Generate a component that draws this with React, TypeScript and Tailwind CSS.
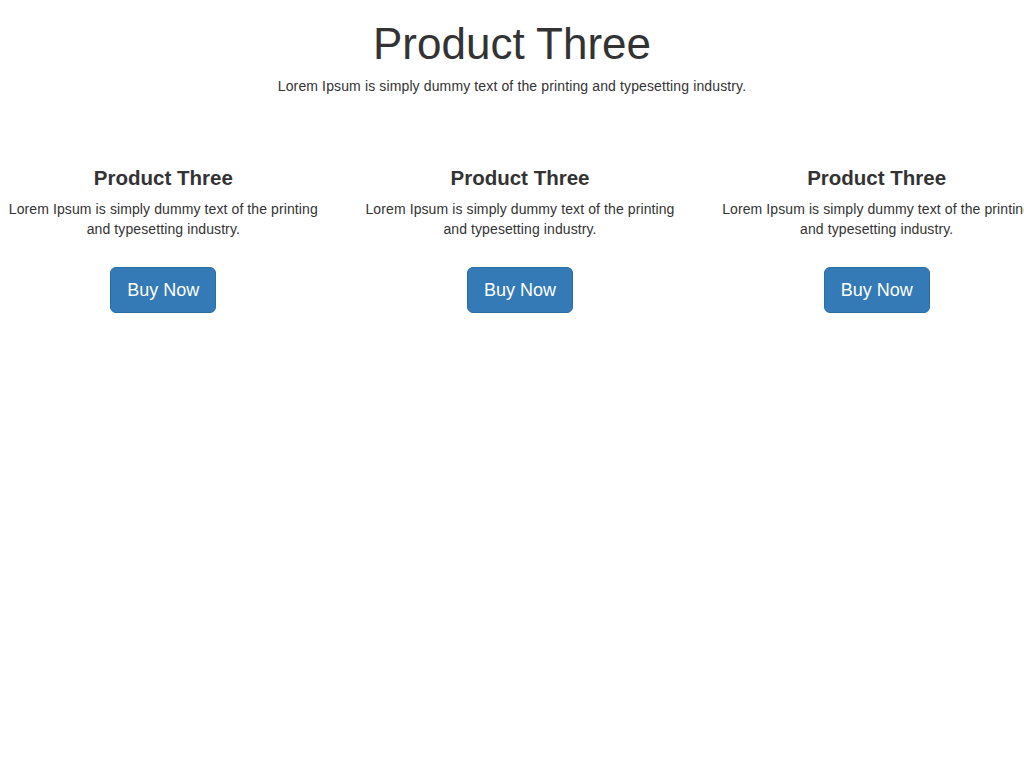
const products = [
  { title: 'Product Three', text: 'Lorem Ipsum is simply dummy text of the printing and typesetting industry.' },
  { title: 'Product Three', text: 'Lorem Ipsum is simply dummy text of the printing and typesetting industry.' },
  { title: 'Product Three', text: 'Lorem Ipsum is simply dummy text of the printing and typesetting industry.' },
];

export default function App() {
  return (
    <div className="min-h-[768px] w-full overflow-hidden bg-white text-[#333] font-['Liberation_Sans',Arial,sans-serif]">
      <div className="text-center">
        <h1 className="pt-[20px] text-[44px] leading-[48px] font-normal">Product Three</h1>
        <p className="mt-[8px] text-[14px] leading-[20px] tracking-[0.13px]">
          Lorem Ipsum is simply dummy text of the printing and typesetting industry.
        </p>
      </div>

      <div className="mt-[70px] -ml-[15px] flex w-[1070px]">
        {products.map((p, i) => (
          <div key={i} className="w-1/3 px-[15px] text-center">
            <h3 className="text-[20.5px] leading-[24px] font-bold">{p.title}</h3>
            <p className="mt-[9px] text-[14px] leading-[20px] tracking-[0.1px]">{p.text}</p>
            <button className="mt-[28px] rounded-[6px] border border-[#2e6da4] bg-[#337ab7] px-[16px] py-[10px] text-[18px] leading-[24px] text-white">
              Buy Now
            </button>
          </div>
        ))}
      </div>
    </div>
  );
}
